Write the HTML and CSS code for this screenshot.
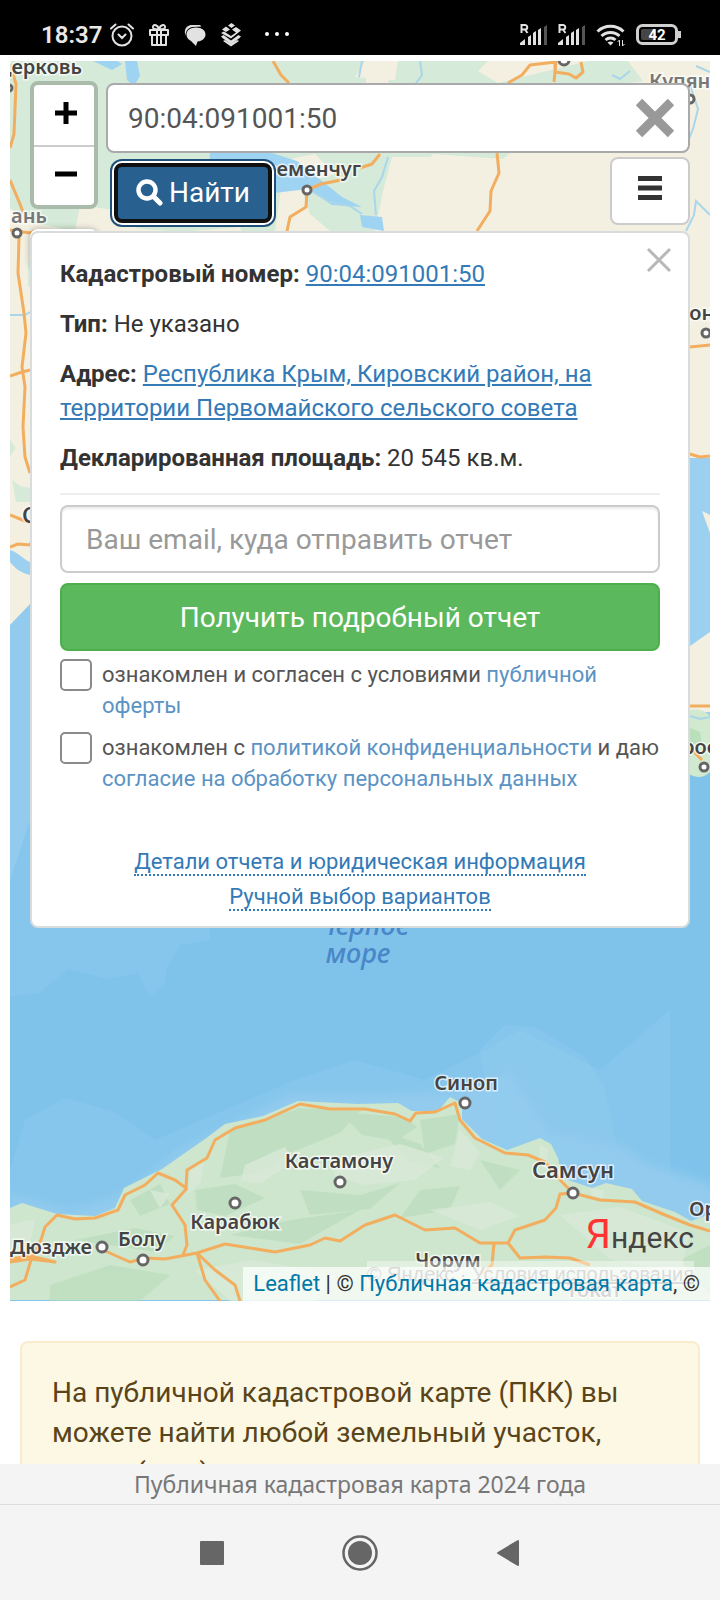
FILE: index.html
```html
<!DOCTYPE html>
<html lang="ru">
<head>
  <meta charset="UTF-8">
  <meta name="viewport" content="width=device-width, initial-scale=1">
  <title>Публичная кадастровая карта</title>
  <link rel="stylesheet" href="styles.css">
</head>
<body>
  <!-- Status bar -->
  <header class="status-bar">
    <span class="time">18:37</span>
    <div class="status-icons">
      <svg width="24" height="24" viewBox="0 0 24 24" fill="none" stroke="#e2e2e2" stroke-width="2" stroke-linecap="round">
        <circle cx="12" cy="13" r="9.5"/>
        <path d="M8.500 11.500l3.500 3.500 3.500-3.500M1 5.500L5.500 1.500M23 5.500L18.500 1.500"/>
      </svg>
      <svg width="22" height="24" viewBox="0 0 22 24" fill="none" stroke="#e2e2e2" stroke-width="2" stroke-linejoin="round">
        <path d="M2 7h18v5H2zM4 12v10h14V12M9 7v15M13 7v15"/>
        <path d="M11 6C9 1 4.500 1 5 4.500 5.300 6 8 6.500 11 6zM11 6c2-5 6.500-5 6-1.500C16.700 6 14 6.500 11 6z"/>
      </svg>
      <svg width="22" height="24" viewBox="0 0 22 24">
        <path d="M1.500 13C-1 5 4 1.500 9 2h7l1.500 1.500L8 4C4 5 1.500 8 1.500 13z" fill="#e2e2e2"/>
        <path d="M12 4.500C18 4.500 21.500 7.500 21.500 11.500c0 3.500-3 6.500-8 7l-1.500 4.500-5-5C4 16.500 2.500 14.500 2.500 11.500c0-4 3.500-7 9.500-7z" fill="#e2e2e2"/>
      </svg>
      <svg width="22" height="24" viewBox="0 0 22 24" fill="#e2e2e2">
        <path d="M2 6.500L6 3.500l4 3-4 2.500zM8 2.500L11.500 0 15 2.500 11.500 5zM1 10l3-1.500 7 4.500 5-3.500-4-3 4-2.500 5 3.500L11 15.500z"/>
        <path d="M1 13.500l2.500-1.500 7.500 5.500 7.500-5.500 2.500 1.500-2 2L11 21l-8-5.500z"/>
        <path d="M3 18l8 5.500 8-5.500-2-1-6 3.500L5 17z"/>
      </svg>
      <svg class="dots" width="26" height="24" viewBox="0 0 26 24" fill="#fff">
        <circle cx="3" cy="11" r="2"/><circle cx="13" cy="11" r="2"/><circle cx="23" cy="11" r="2"/>
      </svg>
    </div>
    <div class="status-right">
      <svg width="28" height="22" viewBox="0 0 28 22" fill="#e2e2e2">
        <path d="M1.500 9V1h3.500a2 2 0 0 1 0 4.500H1.500M5 5.500L7.500 9" fill="none" stroke="#e2e2e2" stroke-width="2"/>
        <path d="M0 21v-2l5-4v6zM8 13l3-2v10H8zM13 9l3-2v14h-3zM18 6l3-2v17h-3z"/>
        <path d="M24 3l3-2v20h-3z" fill="#555"/>
      </svg>
      <svg width="28" height="22" viewBox="0 0 28 22" fill="#e2e2e2">
        <path d="M1.500 9V1h3.500a2 2 0 0 1 0 4.500H1.500M5 5.500L7.500 9" fill="none" stroke="#e2e2e2" stroke-width="2"/>
        <path d="M0 21v-2l5-4v6zM8 13l3-2v10H8zM13 9l3-2v14h-3zM18 6l3-2v17h-3z"/>
        <path d="M24 3l3-2v20h-3z" fill="#555"/>
      </svg>
      <svg width="30" height="24" viewBox="0 0 30 24" fill="none" stroke="#e2e2e2" stroke-width="3">
        <path d="M1.500 8.500a19 19 0 0 1 26 0M5.500 13a13 13 0 0 1 18 0M9.500 17a7.500 7.500 0 0 1 10 0"/>
        <path d="M11.500 19.500a5 5 0 0 1 6 0L14.500 22.500z" fill="#e2e2e2" stroke="none"/>
        <path d="M23.500 23v-6l-2 2M26.500 17v6l2-2" stroke-width="1"/>
      </svg>
      <svg width="46" height="22" viewBox="0 0 46 22" fill="none">
        <rect x="1.500" y="1.500" width="39" height="18" rx="5" stroke="#cfcfcf" stroke-width="3"/>
        <rect x="5" y="5" width="15" height="11" rx="2" fill="#454545"/>
        <path d="M43.500 7v7" stroke="#cfcfcf" stroke-width="3"/>
        <text class="battery-text" x="21" y="16" text-anchor="middle">42</text>
      </svg>
    </div>
  </header>

  <main class="page">
    <div class="map">
      <!-- Map drawing -->
      <svg class="map-canvas" viewBox="10 61 700 1240" preserveAspectRatio="xMidYMid slice">
        <defs>
          <filter id="soft" x="-20%" y="-20%" width="140%" height="140%"><feGaussianBlur stdDeviation="5"/></filter>
        </defs>
        <rect x="10" y="61" width="700" height="1240" fill="#7fc3eb"/>
        <g fill="#92cbee">
          <path d="M10 560h200v380l-30 5-12 20-4 20-14 12-12-24-30 6-40-10-30 25-28 2z" opacity=".4"/>
          <path d="M10 600l50-40v200l-30 60-20 60z"/>
          <path d="M680 450h30v280l-30 30z" fill="#9bd0f0"/>
          <path d="M10 1170l15-50 40-22 50 14 40 28 140-60 60-20 70 20 60-30 35-20 80 40 70-60v291H10z" opacity=".4"/>
          <path d="M10 1195l60 15 50-15 60-45 110-55 90 0 90-5 40-20 40 60 70 15 30 20 50 15 70 30v20H10z" filter="url(#soft)"/>
          <path d="M480 1050l25-25 30 2 50 30 20 30 20 100-130-40z" opacity=".4"/>
        </g>

        <!-- North coast -->
        <path d="M10 61h700v397H690L500 520H200L30 604 10 625z" fill="#f3f0e2"/>
        <path d="M690 646l20-14v80h-20zM702 511l8 4v18z" fill="#f3f0e2"/>
        <path d="M686 712c10-5 18-2 24 4v56c-8 8-20 6-26-4z" fill="#d0e9cf"/>
        <path d="M690 728l10 4 2 12-14 2z" fill="#b9dfbb"/>
        <g fill="#d5ead8">
          <path d="M10 61h355l-10 16 40 3 3-19h90l-10 10 20 12 90-22h40l15 20-60 8-80 70-70-5-15 20-6 40-15 30h-20l-6 8H250l-10-25-60 5-60-5-40 5-50-10-20-14z"/>
          <path d="M28 262l8 4v25l-8-5zM10 440l6 8-6 8zM12 480l8 6 10 2v14H16z"/>
        </g>
        <path d="M366 61l28 0-6 22-22 2zM285 160l30-6 20 20-35 10 10 30 20 17h-55zM80 205l40 6 20 20H75zM392 157h60l-10 74H375l8-40z" fill="#f3f0e2"/>
        <path d="M93 61h24l5 3-10 6zM125 61h12l3 15-6 10-7-6zM210 153h62l25 8 45 36 20 10-30-2-24-16-34 4-25-20-40-6zM360 215l22 2 2 14-22-4z" fill="#9fd3f2"/>
        <path d="M10 550c8 2 14 10 20 12v13c-10-2-16-8-20-13z" fill="#9bd0f0"/>
        <g fill="none" stroke="#a9d6ea" stroke-width="2">
          <path d="M310 190l20 12 20 4 12 8M388 157l-6 20-8 14 2 24M420 61l2 14-6 8M362 61l-3 16M690 85l8 24-5 20-10 24M710 215l-14-14-2 14-8 16M612 75l8 4 10-8M710 72l-14-6M10 315h15l5-3"/>
          <path d="M690 716l10 3 10-2M470 1180l-15 12-20-6-12 14-10 14-20 3M442 1235l-5 16 4 14M602 1185l4 20-4 20"/>
        </g>
        <g class="road">
          <path d="M273 61l8 14 8 8M10 64l6 20-2 50-4 14M10 180l10 24 3 8M10 230l20 3 5-2M508 83l14-8 8-10 26-3-2 20M555 62v10l14 2 7 4 7-6-2-10M287 231l3-14 16-10 1-17 14-6 20-4M360 168l12-4 8-10M497 153l2 20-8 18-1 20-13 20M19 238l-1 35 6 40 2 20-4 34 3 20-2 40 2 30 5 16M10 376l12-4 8-2M10 515l10 4 10 4M10 547l8-3 12 1 2-4M690 347l20-2M690 454l10 3 10-1M690 706h20M692 750l10 10"/>
        </g>

        <!-- South coast -->
        <path d="M10 1208l12-5 35 11 38 2 20-8 9-20 38-19 43-30 20-15 38-8 35-15 60 3 40-1 14 8 26 0 12-14 12 6v16l20 20 25 11 33-12 11 6 7 14 4 20 30 10 14-5 26 6 10 12 33 11 16 9 19-7v86H10z" fill="#cde6cd"/>
        <g fill="#b9dcbb" opacity=".6">
          <path d="M230 1130l70-22 60 3-20 22-50 20-30 20-40 5zM340 1112l65 5 12 10-20 14-35-6zM420 1120l40-6-5 30-30 10zM195 1190l40-6 30 14-40 18-28-6zM230 1235l60-15 70-10-60 34zM130 1200l30-16 10 20-30 12z"/>
          <path d="M380 1130l40 14 20 24-30-6zM300 1190l60 5 40-12-30 26-60 6zM75 1240l60-12 40 8-20 16zM480 1160l40 10-20 20zM420 1190l40-4-10 24-50 8zM50 1285l60-20 60 10-30 26H50zM680 1260l30-15v50z"/>
        </g>
        <g fill="#dcebda" opacity=".7">
          <path d="M245 1165l40-18 10 14-34 22-20-2zM190 1170l14-8-4 22-12 10zM330 1160l70-16 44 14-30 22-50 5-30-10zM540 1145l8 4-2 20-8-6zM150 1190l20 4-10 14zM460 1130l20 22-10 18-20-4z"/>
          <path d="M195 1270l60-10 80 15-20 26h-85zM430 1210l60-8 30 14-40 14zM560 1215l60-8 70 26-10 40-70-14zM10 1225l25-6-6 30-19 4zM590 1188l14 2-2 8-10-2z"/>
        </g>
        <g class="road">
          <path d="M10 1287l15-7 6-20 10-20 4-13 12-12 18 4 20-1 23-8 7-15 20-10 13-12 17 7 11 8 1-18 20-12 8-18 20-12 30-8 35-16 30 5h35l30 5 15 7 6-8 19-1 20-9 5 17 15 18 30 15 23 2 17 7 17 20 11 11 27 7 35 2 30 13 25 10 20 6"/>
          <path d="M187 1188l-15 17 13 20 2 20-4 10M10 1262l20-3 25 3-25-6-20 3M103 1250l27 12 15-4 20 1 32-6 28-9 50 8 35-7 15-7 15 3 25-16 30-10 30 15 30-2 25 15h28l7-13 30-10 11-12 4-14 13-1M508 1243l12 15 25-1 25 1 20 7M494 1243l-2 22-12 10M197 1253l8 27 15 21M197 1253l18 17 20 15 5 16"/>
        </g>

        <!-- Cities -->
        <g class="dot">
          <circle cx="465" cy="1103" r="5"/><circle cx="340" cy="1182" r="5"/><circle cx="235" cy="1203" r="5"/><circle cx="102" cy="1247" r="5"/>
          <circle cx="143" cy="1260" r="5"/><circle cx="573" cy="1193" r="5"/><circle cx="307" cy="190" r="4"/><circle cx="17" cy="233" r="4"/>
          <circle cx="564" cy="60" r="5"/><circle cx="690" cy="99" r="4"/><circle cx="706" cy="333" r="4"/><circle cx="704" cy="767" r="4"/><circle cx="9" cy="88" r="3"/>
        </g>
        <g class="city">
          <text x="82" y="74" text-anchor="end">церковь</text>
          <text class="light" x="47" y="223" text-anchor="end">Умань</text>
          <text x="361" y="176" text-anchor="end">Кременчуг</text>
          <text class="light" x="649" y="88">Купянск</text>
          <text x="674" y="320">Донецк</text>
          <text class="big" x="22" y="523">Одесса</text>
          <text x="703" y="754" text-anchor="middle">Новороссийск</text>
          <text x="466" y="1090" text-anchor="middle">Синоп</text>
          <text x="339" y="1168" text-anchor="middle">Кастамону</text>
          <text class="big" x="573" y="1178" text-anchor="middle">Самсун</text>
          <text x="235" y="1229" text-anchor="middle">Карабюк</text>
          <text x="142" y="1246" text-anchor="middle">Болу</text>
          <text x="92" y="1254" text-anchor="end">Дюздже</text>
          <text x="448" y="1267" text-anchor="middle">Чорум</text>
          <text x="689" y="1216">Орду</text>
          <text class="light" x="594" y="1297" text-anchor="middle">Токат</text>
        </g>
        <g class="sea-name">
          <text x="364" y="935" text-anchor="middle">Черное</text>
          <text x="358" y="963" text-anchor="middle">море</text>
        </g>
      </svg>

      <!-- Controls over the map -->
      <div class="map-overlay">
        <div class="controls">
          <div class="side-controls">
            <div class="zoom">
              <button type="button" aria-label="Приблизить">
                <svg width="22" height="22" viewBox="0 0 22 22"><path d="M11 0v22M0 11h22" stroke="#000" stroke-width="5"/></svg>
              </button>
              <button type="button" aria-label="Отдалить">
                <svg width="22" height="22" viewBox="0 0 22 22"><path d="M0 11h22" stroke="#000" stroke-width="5"/></svg>
              </button>
            </div>
            <div class="layers"></div>
          </div>
          <form class="search">
            <div class="search-box">
              <input type="text" value="90:04:091001:50" aria-label="Кадастровый номер">
              <button type="button" class="clear" aria-label="Очистить">
                <svg width="40" height="40" viewBox="0 0 40 40"><path d="M4 4l32 32M36 4L4 36" stroke="#999" stroke-width="9"/></svg>
              </button>
            </div>
            <div class="search-actions">
              <button type="button" class="find">
                <svg width="27" height="27" viewBox="0 0 27 27" fill="none" stroke="#fff"><circle cx="11" cy="11" r="8.500" stroke-width="4.500"/><path d="M17.500 17.500l6.500 6.500" stroke-width="5" stroke-linecap="round"/></svg>
                Найти
              </button>
              <button type="button" class="menu" aria-label="Меню">
                <svg width="24" height="24" viewBox="0 0 24 24"><path d="M0 2.500h24M0 12h24M0 21.500h24" stroke="#333" stroke-width="5"/></svg>
              </button>
            </div>
          </form>
        </div>

        <section class="panel">
          <button type="button" class="panel-close" aria-label="Закрыть">
            <svg width="26" height="26" viewBox="0 0 26 26"><path d="M2 2l22 22M24 2L2 24" stroke="#b8b8b8" stroke-width="3"/></svg>
          </button>
          <div class="info">
            <p><b>Кадастровый номер:</b> <a href="#">90:04:091001:50</a></p>
            <p><b>Тип:</b> Не указано</p>
            <p><b>Адрес:</b> <a href="#">Республика Крым, Кировский район, на территории Первомайского сельского совета</a></p>
            <p><b>Декларированная площадь:</b> 20 545 кв.м.</p>
          </div>
          <hr>
          <form class="order">
            <input type="email" placeholder="Ваш email, куда отправить отчет" aria-label="Email">
            <button type="button">Получить подробный отчет</button>
            <div class="terms">
              <div class="agree">
                <input type="checkbox" id="offer">
                <label for="offer">ознакомлен и согласен с условиями <a href="#">публичной оферты</a></label>
              </div>
              <div class="agree">
                <input type="checkbox" id="privacy">
                <label for="privacy">ознакомлен с <a href="#">политикой конфиденциальности</a> и даю <a href="#">согласие на обработку персональных данных</a></label>
              </div>
            </div>
          </form>
          <div class="more">
            <div><a href="#">Детали отчета и юридическая информация</a></div>
            <div><a href="#">Ручной выбор вариантов</a></div>
          </div>
        </section>
      </div>

      <div class="yandex">
        <div class="yandex-logo"><span>Я</span>ндекс</div>
        <div class="yandex-terms">© Яндекс · <a href="#">Условия использования</a></div>
      </div>
      <div class="attribution"><a href="#">Leaflet</a> | © <a href="#">Публичная кадастровая карта</a>, ©</div>
    </div>

    <div class="alert">На публичной кадастровой карте (ПКК) вы можете найти любой земельный участок, адрес (дом) и узнать сведения о нем</div>
  </main>

  <footer class="page-footer">Публичная кадастровая карта 2024 года</footer>

  <!-- Android navigation -->
  <nav class="nav-bar">
    <button type="button" aria-label="Недавние"><svg width="24" height="36" viewBox="0 0 24 36"><rect y="6" width="24" height="24" rx="1" fill="#666"/></svg></button>
    <button type="button" aria-label="Домой"><svg width="36" height="36" viewBox="0 0 36 36"><circle cx="18" cy="18" r="16.500" fill="none" stroke="#666" stroke-width="2.500"/><circle cx="18" cy="18" r="12" fill="#666"/></svg></button>
    <button type="button" aria-label="Назад"><svg width="24" height="36" viewBox="0 0 24 36"><path d="M22 6v24L2 18z" fill="#666" stroke="#666" stroke-width="2" stroke-linejoin="round"/></svg></button>
  </nav>
</body>
</html>
```
FILE: styles.css
```css
* {
  box-sizing: border-box;
}
body {
  margin: 0;
  height: 100vh;
  display: flex;
  flex-direction: column;
  font-family: Roboto, "Liberation Sans", sans-serif;
  font-size: 24px;
  color: #333;
  background: #fff;
}
button,
input {
  font: inherit;
  margin: 0;
}
button {
  display: flex;
  align-items: center;
  justify-content: center;
  padding: 0;
  border: 0;
  background: none;
  cursor: pointer;
}
svg {
  display: block;
}
a {
  color: #337ab7;
}

/* status bar */
.status-bar {
  display: flex;
  align-items: center;
  height: 55px;
  padding: 14px 38px 0 41px;
  background: #000;
}
.time {
  color: #e8e8e8;
  font-weight: 600;
}
.status-icons {
  display: flex;
  align-items: center;
  gap: 14px;
  margin-left: 8px;
}
.dots {
  margin-left: 8px;
}
.status-right {
  display: flex;
  align-items: center;
  gap: 10px;
  margin-left: auto;
}
.battery-text {
  font-size: 15px;
  font-weight: 700;
  fill: #fff;
}

/* map */
.page {
  flex: 1;
  min-height: 0;
  overflow: hidden;
  padding: 6px 10px 0;
}
.map {
  position: relative;
  height: calc(100vh - 360px);
  overflow: hidden;
}
.map-canvas {
  width: 100%;
  height: 100%;
}
.road {
  fill: none;
  stroke: #f2ae5e;
  stroke-width: 3;
  stroke-linejoin: round;
}
.dot {
  fill: #fff;
  stroke: #666;
  stroke-width: 3;
}
.city {
  font-family: "Noto Sans", sans-serif;
  font-size: 20px;
  font-weight: 600;
  fill: #444;
  stroke: #fff;
  stroke-width: 3px;
  stroke-opacity: 0.7;
  paint-order: stroke;
}
.city .big {
  font-size: 22px;
}
.city .light {
  fill: #777;
}
.sea-name {
  font-family: "Noto Sans", sans-serif;
  font-size: 27px;
  font-style: italic;
  font-weight: 500;
  fill: #4a86c8;
}
.map-overlay {
  position: absolute;
  top: 20px;
  left: 20px;
  right: 20px;
}

/* zoom and search */
.controls {
  display: flex;
  align-items: flex-start;
  gap: 8px;
}
.side-controls {
  width: 68px;
}
.zoom {
  border: 4px solid #aabbac;
  border-radius: 8px;
  background: #fff;
}
.zoom button {
  width: 100%;
  height: 60px;
  padding: 0 0 4px 4px;
}
.zoom button + button {
  border-top: 2px solid #ccc;
}
.layers {
  height: 40px;
  margin: 20px 0 -40px;
  border-radius: 8px;
  background: #fff;
  box-shadow: 0 0 6px rgba(0, 0, 0, 0.3);
}
.search {
  flex: 1;
  padding: 2px 0 6px;
}
.search-box {
  position: relative;
}
.search-box input {
  display: block;
  width: 100%;
  height: 70px;
  padding: 0 70px 0 20px;
  border: 2px solid #aaa;
  border-radius: 8px;
  background: #fff;
  font-size: 28px;
  color: #555;
}
.clear {
  position: absolute;
  top: 15px;
  right: 15px;
}
.search-actions {
  display: flex;
  align-items: flex-start;
  justify-content: space-between;
  padding: 4px 0 0 8px;
}
.find {
  gap: 6px;
  height: 60px;
  margin-top: 6px;
  padding: 0 18px 2px;
  border: 4px solid #101010;
  border-radius: 8px;
  background: #286090;
  box-shadow: 0 0 0 2px #fff, 0 0 0 4px #1f4e79;
  font-size: 28px;
  color: #fff;
}
.menu {
  width: 80px;
  height: 68px;
  padding-bottom: 6px;
  border: 2px solid #ccc;
  border-radius: 8px;
  background: #fff;
}

/* object card */
.panel {
  position: relative;
  padding: 24px 28px 12px;
  border: 2px solid #d8dcdc;
  border-radius: 8px;
  background: #fff;
}
.panel-close {
  position: absolute;
  top: 14px;
  right: 16px;
}
.info p {
  margin: 0 0 16px;
  line-height: 34px;
}
.panel hr {
  margin: 18px 0 10px;
  border: 0;
  border-top: 2px solid #eee;
}
.order {
  display: flex;
  flex-direction: column;
  gap: 10px;
}
.order input[type="email"] {
  width: 100%;
  height: 68px;
  padding: 0 24px;
  border: 2px solid #ccc;
  border-radius: 8px;
  background: #fff;
  box-shadow: inset 0 2px 2px rgba(0, 0, 0, 0.08);
  font-size: 28px;
}
.order input::placeholder {
  color: #999;
}
.order button {
  height: 68px;
  border: 2px solid #4cae4c;
  border-radius: 8px;
  background: #5cb85c;
  font-size: 28px;
  color: #fff;
}
.terms {
  display: flex;
  flex-direction: column;
  gap: 11px;
  margin-top: -2px;
}
.agree {
  display: flex;
  align-items: flex-start;
  gap: 10px;
  font-size: 22px;
  line-height: 31px;
  color: #555;
}
.agree input {
  appearance: none;
  flex: none;
  width: 32px;
  height: 32px;
  border: 2px solid #8a8a8a;
  border-radius: 5px;
  background: #fff;
}
.agree a {
  color: #5a93c4;
  text-decoration: none;
}
.more {
  margin-top: 50px;
  text-align: center;
  font-size: 22px;
  line-height: 35px;
}
.more a {
  border-bottom: 2px dotted #337ab7;
  text-decoration: none;
}

/* map credits */
.yandex {
  position: absolute;
  right: 16px;
  bottom: 14px;
  text-align: right;
}
.yandex-logo {
  font-size: 30px;
  line-height: 46px;
  color: #444;
}
.yandex-logo span {
  font-size: 40px;
  color: #f33;
}
.yandex-terms {
  font-family: "Liberation Sans", sans-serif;
  font-size: 20px;
  line-height: 26px;
  color: #888;
  background: rgba(255, 255, 255, 0.4);
}
.yandex-terms a {
  color: #888;
}
.attribution {
  position: absolute;
  right: 0;
  bottom: 0;
  padding: 0 10px;
  background: rgba(255, 255, 255, 0.7);
  font-size: 22px;
  line-height: 34px;
}
.attribution a {
  color: #0078a8;
  text-decoration: none;
}

/* text under the map */
.alert {
  margin: 40px 10px 0;
  padding: 30px;
  border: 2px solid #faebcc;
  border-radius: 8px;
  background: #fcf8e3;
  font-size: 28px;
  line-height: 40px;
  color: #5a4419;
}
.page-footer {
  background: #f4f4f4;
  border-bottom: 1px solid #ddd;
  font-family: "Noto Sans", sans-serif;
  font-size: 23px;
  line-height: 40px;
  text-align: center;
  color: #777;
}
.nav-bar {
  display: flex;
  align-items: center;
  justify-content: center;
  gap: 118px;
  height: 95px;
  background: #f4f4f4;
}
```
